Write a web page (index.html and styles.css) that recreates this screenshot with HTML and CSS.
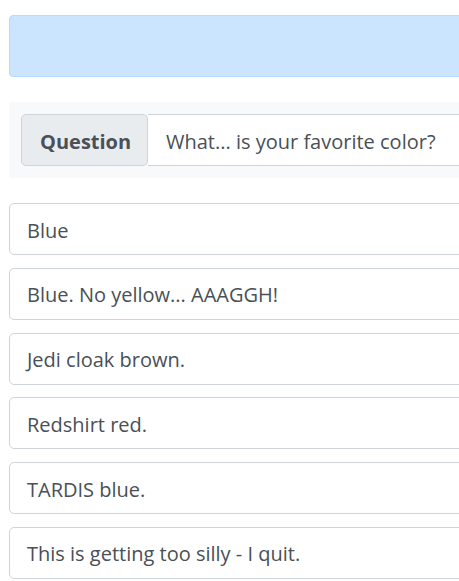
FILE: index.html
```html
<!DOCTYPE html>
<html lang="en">
<head>
<meta charset="utf-8">
<title>Quiz</title>
<link rel="stylesheet" href="styles.css">
</head>
<body>
<div class="page">
  <div class="alert"></div>
  <div class="panel">
    <div class="input-group">
      <span class="prepend">Question</span>
      <div class="field">What... is your favorite color?</div>
    </div>
  </div>
  <ul class="answers">
    <li class="answer">Blue</li>
    <li class="answer">Blue. No yellow... AAAGGH!</li>
    <li class="answer">Jedi cloak brown.</li>
    <li class="answer">Redshirt red.</li>
    <li class="answer">TARDIS blue.</li>
    <li class="answer">This is getting too silly - I quit.</li>
  </ul>
</div>
</body>
</html>
```

FILE: styles.css
```css
html, body {
  margin: 0;
  padding: 0;
  overflow: hidden;
  background: #fff;
}
body {
  font-family: "Open Sans", "Noto Sans", sans-serif;
  color: #495057;
}
.page {
  width: 600px;
  padding: 15px 0 0 9px;
}
.alert {
  height: 62px;
  box-sizing: border-box;
  background: #cce5ff;
  border: 1px solid #b8daff;
  border-radius: 4px;
}
.panel {
  margin-top: 25px;
  background: #f8f9fa;
  padding: 12px;
  height: 76px;
  box-sizing: border-box;
}
.input-group {
  display: flex;
  height: 52px;
}
.prepend {
  display: flex;
  align-items: center;
  box-sizing: border-box;
  width: 127px;
  padding: 2px 16px 0 18px;
  background: #e9ecef;
  border: 1px solid #ced4da;
  border-radius: 5px;
  font-weight: bold;
  font-size: 20px;
}
.field {
  flex: 1;
  display: flex;
  align-items: center;
  box-sizing: border-box;
  padding: 2px 16px 0 18px;
  background: #fff;
  border: 1px solid #ced4da;
  border-left: none;
  font-size: 20px;
}
.answers {
  list-style: none;
  margin: 25px 0 0;
  padding: 0;
  display: flex;
  flex-direction: column;
  gap: 12.8px;
}
.answer {
  height: 52px;
  box-sizing: border-box;
  display: flex;
  align-items: center;
  padding: 2px 16px 0 17px;
  border: 1px solid #ced4da;
  border-radius: 5px;
  font-size: 20px;
}
```
